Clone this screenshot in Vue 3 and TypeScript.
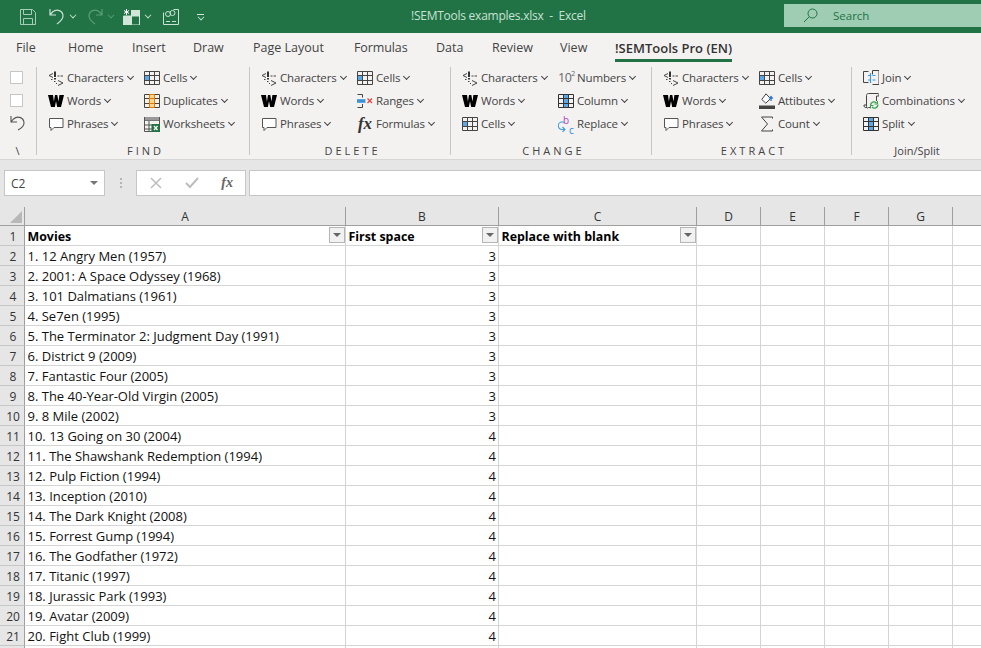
<script setup lang="ts">
type Item = { icon: string; label: string };
type Group = { name: string; width: number; spaced: boolean; cols: { width: number; items: Item[] }[] };

const phr = (): Item[] => [
  { icon: "chars", label: "Characters" },
  { icon: "words", label: "Words" },
  { icon: "phrases", label: "Phrases" },
];

const groups: Group[] = [
  { name: "FIND", width: 213, spaced: true, cols: [
    { width: 96, items: phr() },
    { width: 100, items: [
      { icon: "cells", label: "Cells" },
      { icon: "dups", label: "Duplicates" },
      { icon: "sheets", label: "Worksheets" },
    ] },
  ] },
  { name: "DELETE", width: 201, spaced: true, cols: [
    { width: 96, items: phr() },
    { width: 90, items: [
      { icon: "cells", label: "Cells" },
      { icon: "ranges", label: "Ranges" },
      { icon: "fx", label: "Formulas" },
    ] },
  ] },
  { name: "CHANGE", width: 201, spaced: true, cols: [
    { width: 96, items: [
      { icon: "chars", label: "Characters" },
      { icon: "words", label: "Words" },
      { icon: "cells", label: "Cells" },
    ] },
    { width: 90, items: [
      { icon: "num", label: "Numbers" },
      { icon: "column", label: "Column" },
      { icon: "replace", label: "Replace" },
    ] },
  ] },
  { name: "EXTRACT", width: 200, spaced: true, cols: [
    { width: 96, items: phr() },
    { width: 90, items: [
      { icon: "cells", label: "Cells" },
      { icon: "attr", label: "Attibutes" },
      { icon: "sum", label: "Count" },
    ] },
  ] },
  { name: "Join/Split", width: 130, spaced: false, cols: [
    { width: 118, items: [
      { icon: "join", label: "Join" },
      { icon: "combo", label: "Combinations" },
      { icon: "column", label: "Split" },
    ] },
  ] },
];

const tabs = ["File", "Home", "Insert", "Draw", "Page Layout", "Formulas", "Data", "Review", "View", "!SEMTools Pro (EN)"];
const columns = ["A", "B", "C", "D", "E", "F", "G", ""];
const movies = [
  "1. 12 Angry Men (1957)", "2. 2001: A Space Odyssey (1968)", "3. 101 Dalmatians (1961)", "4. Se7en (1995)",
  "5. The Terminator 2: Judgment Day (1991)", "6. District 9 (2009)", "7. Fantastic Four (2005)",
  "8. The 40-Year-Old Virgin (2005)", "9. 8 Mile (2002)", "10. 13 Going on 30 (2004)",
  "11. The Shawshank Redemption (1994)", "12. Pulp Fiction (1994)", "13. Inception (2010)",
  "14. The Dark Knight (2008)", "15. Forrest Gump (1994)", "16. The Godfather (1972)", "17. Titanic (1997)",
  "18. Jurassic Park (1993)", "19. Avatar (2009)", "20. Fight Club (1999)",
];
const spaces = movies.map((_, i) => (i < 9 ? 3 : 4));
const heads = ["Movies", "First space", "Replace with blank"];
</script>

<template>
  <div class="app">
    <svg class="defs" width="0" height="0">
      <symbol id="chars" viewBox="0 0 16 16">
        <path d="M5 3.500 1 5.500l4 2M10 10.500l5 2.500-5 2.500M9.500 6h2M12.500 6h2.500M3 9.500h1.500M6 11.500h1.500M8 13.500h1" fill="none" stroke="#444" />
        <path d="M6 1.500h2v5.500H6zM6 8h2v1.500H6z" fill="#333" />
      </symbol>
      <symbol id="words" viewBox="0 0 16 16">
        <path d="M0 2h5l.9 6.500L7 2h2.300l1.200 6.500L11.400 2H16l-3 12H9.200L8 8.300 6.900 14H3z" fill="#000" />
      </symbol>
      <symbol id="phrases" viewBox="0 0 16 16">
        <path d="M1.500 2.500h13.500v9H6l-3 3v-3H1.500z" fill="#fff" stroke="#555" />
      </symbol>
      <symbol id="cells" viewBox="0 0 16 16">
        <rect x="1" y="5.500" width="5" height="5" fill="#5ca8e6" />
        <path d="M.5 1.500h15v13H.5zM5.500 1.500v13M10.500 1.500v13M.5 5.500h15M.5 10.500h15" fill="none" stroke="#444" />
      </symbol>
      <symbol id="dups" viewBox="0 0 16 16">
        <path d="M5.500 1.500h5v13h-5z" fill="#fbd38a" />
        <path d="M.5 1.500h15v13H.5zM.5 5.500h15M.5 10.500h15" fill="none" stroke="#444" />
        <path d="M5.500 1.500h5v13h-5zM5.500 5.500h5M5.500 10.500h5" fill="none" stroke="#e07b00" />
      </symbol>
      <symbol id="sheets" viewBox="0 0 16 16">
        <path d="M.5 4.500h15M.5 9h8M.5 13h8M5 4.500v11" stroke="#555" fill="none" />
        <path d="M.5 1h15v3.500H.5z" fill="#999" />
        <path d="M.5 1v14.500h8M15.500 1v7" stroke="#555" fill="none" />
        <rect x="7.500" y="8" width="8.500" height="8" fill="#217346" />
        <path d="M10 10l3.500 4M13.500 10 10 14" stroke="#fff" stroke-width="1.300" />
      </symbol>
      <symbol id="ranges" viewBox="0 0 16 16">
        <path d="M5.500 1.500H.5M.5 14.500h5M5.500 1.500v3M5.500 11v3.500" stroke="#444" fill="none" />
        <rect x="0" y="6" width="8.500" height="4" fill="#5ca8e6" />
        <path d="M0 8h8" stroke="#2a78b8" />
        <path d="M10.500 5.500l4.500 4.500M15 5.500 10.500 10" stroke="#e8413c" stroke-width="1.200" />
      </symbol>
      <symbol id="column" viewBox="0 0 16 16">
        <rect x="5.500" y="1.500" width="5" height="13" fill="#5ca8e6" />
        <path d="M.5 1.500h15v13H.5zM5.500 1.500v13M10.500 1.500v13M.5 5.500h15M.5 10.500h15" fill="none" stroke="#333" />
      </symbol>
      <symbol id="replace" viewBox="0 0 16 16">
        <path d="M6 6H4a3.500 3.500 0 0 0 0 7.500H6.500M4.500 11l2.500 2.500L4.500 16" fill="none" stroke="#3b9ae0" stroke-width="1.100" />
      </symbol>
      <symbol id="attr" viewBox="0 0 16 16">
        <rect x="0" y="12.500" width="16" height="3.500" fill="#444" />
        <path d="M7 .8 2.800 6.500l4 3.700 4.700-4.500z" fill="#fff" stroke="#444" />
        <path d="M12 8V4M10.300 5.500 12 3.500l1.700 2" fill="none" stroke="#2b7cd3" stroke-width="1.300" />
      </symbol>
      <symbol id="sum" viewBox="0 0 16 16">
        <path d="M13.500 2.500V1H2.500l6 7-6 7h11v-1.500" fill="none" stroke="#444" />
      </symbol>
      <symbol id="join" viewBox="0 0 16 16">
        <path d="M5.500 1.500H.5v11h5M9.500 4.500V.5h6.500v14H9.500" fill="none" stroke="#444" />
        <path d="M7.500 3v10M5 5.500h2.500M5 10h2.500M9.500 5.500h3M9.500 10h3" stroke="#3b9ae0" stroke-width="1.200" fill="none" />
      </symbol>
      <symbol id="combo" viewBox="0 0 16 16">
        <path d="M4 14.500H2.500L1 13.500V12h2.500V2.500C3.500 1 4.500.5 5.500.5h9.500c.7 0 1 1 1 2.500h-2.500v5M3.500 12v1.500a1 1 0 0 0 2 1h2" fill="none" stroke="#444" />
        <path d="M7.500 12.500a3.500 3.500 0 0 1 6-2.500M15 11.500a3.500 3.500 0 0 1-6 2.500" fill="none" stroke="#3aa14b" stroke-width="1.300" />
        <path d="M14.500 8v3h-3M7.500 15.500v-3h3" fill="none" stroke="#3aa14b" />
      </symbol>
    </svg>

    <header class="titlebar">
      <div class="qat">
        <svg class="q" width="16" height="16" viewBox="0 0 16 16" fill="none" stroke="#a5cfb7">
          <path d="M.5.500h12l3 3v12H.5zM3.500.500v5h8v-5M3.500 15.500v-6h9v6" />
        </svg>
        <svg class="q undo" width="16" height="17" viewBox="0 0 16 17" fill="none" stroke="#c8e2d3" stroke-width="1.200">
          <path d="M1 1v6h6M1 7l2.500-3C8 0 14 3 14 8c0 3-2 5-6 8" />
        </svg>
        <i class="caret c1" />
        <svg class="q redo" width="16" height="17" viewBox="0 0 16 17" fill="none" stroke="#5b9d79" stroke-width="1.200">
          <path d="M15 1v6H9M15 7l-2.500-3C8 0 2 3 2 8c0 3 2 5 6 8" />
        </svg>
        <i class="caret c2 dim" />
        <svg class="q tbl" width="17" height="16" viewBox="0 0 17 16">
          <path d="M0 7h8v9H0zM8 1h8v6H8z" fill="#cfe6d9" />
          <path d="M8.500 1v15M16.500 1v15H.5V7h16" fill="none" stroke="#cfe6d9" />
          <path d="M3.500 0v6M1 1.500l5 3M6 1.500l-5 3" stroke="#fff" />
        </svg>
        <i class="caret c3" />
        <svg class="q form" width="16" height="16" viewBox="0 0 16 16" fill="none" stroke="#c8e2d3">
          <path d="M.5 3.500v12h15V.5h-5M3 12.500h4M9 12.500h4" />
          <circle cx="5" cy="5" r="2.500" />
          <circle cx="9.500" cy="4" r="2.500" />
        </svg>
        <span class="custom"><b /><i class="caret" /></span>
      </div>
      <div class="title">!SEMTools examples.xlsx&nbsp; - &nbsp;Excel</div>
      <div class="search">
        <svg width="15" height="15" viewBox="0 0 15 15" fill="none" stroke="#217346">
          <circle cx="9.500" cy="5.500" r="4.500" />
          <path d="M6 9 1 14" />
        </svg>
        <span>Search</span>
      </div>
    </header>

    <nav class="tabs">
      <span v-for="(t, i) in tabs" :key="t" class="tab" :class="['t' + i]">{{ t }}</span>
    </nav>

    <section class="ribbon">
      <div class="first">
        <div class="smalls">
          <span class="check" />
          <span class="check" />
          <svg width="16" height="17" viewBox="0 0 16 17" fill="none" stroke="#555" stroke-width="1.100">
            <path d="M1 2v6h6M1 8l2.500-3C8 1 14 4 14 9c0 3-2 5-6 7" />
          </svg>
        </div>
        <div class="glabel slash">\</div>
      </div>
      <div v-for="g in groups" :key="g.name" class="group" :style="{ width: g.width + 'px' }">
        <div class="cols">
          <div v-for="(c, ci) in g.cols" :key="ci" class="col" :style="{ width: c.width + 'px' }">
            <div v-for="it in c.items" :key="it.label" class="item">
              <span v-if="it.icon === 'fx'" class="ico fxi">fx</span>
              <span v-else-if="it.icon === 'num'" class="ico numi">10<sup>2</sup></span>
              <span v-else-if="it.icon === 'replace'" class="ico repi">
                <svg width="16" height="16"><use href="#replace" /></svg>
                <em class="rb">b</em><em class="rc">c</em>
              </span>
              <svg v-else class="ico" width="16" height="16"><use :href="'#' + it.icon" /></svg>
              <span class="lbl">{{ it.label }}</span>
              <i class="chev" />
            </div>
          </div>
        </div>
        <div class="glabel" :class="{ spaced: g.spaced }">{{ g.name }}</div>
      </div>
    </section>

    <section class="fbar">
      <div class="namebox"><span>C2</span><i class="tri" /></div>
      <div class="dots"><b /><b /><b /></div>
      <div class="fbtns">
        <svg width="12" height="12" viewBox="0 0 12 12" stroke="#bdbdbd" stroke-width="1.500"><path d="M1 1l10 10M11 1 1 11" /></svg>
        <svg width="14" height="12" viewBox="0 0 14 12" fill="none" stroke="#bdbdbd" stroke-width="2"><path d="M1 6l4 4 8-9" /></svg>
        <span class="fxtxt">fx</span>
      </div>
      <div class="finput" />
    </section>

    <section class="sheet">
      <div class="corner"><i /></div>
      <div v-for="c in columns" :key="'h' + c" class="colhead">{{ c }}</div>

      <div class="rowhead">1</div>
      <div v-for="(c, i) in columns" :key="'r1' + i" class="cell head">
        <template v-if="i < 3">
          <span>{{ heads[i] }}</span>
          <span class="filter"><i /></span>
        </template>
      </div>

      <template v-for="(m, r) in movies" :key="m">
        <div class="rowhead">{{ r + 2 }}</div>
        <div class="cell">{{ m }}</div>
        <div class="cell num">{{ spaces[r] }}</div>
        <div v-for="k in 6" :key="k" class="cell" />
      </template>
      <div class="rowhead" />
      <div v-for="k in 8" :key="'last' + k" class="cell" />
    </section>
  </div>
</template>

<style>
html, body { margin: 0; background: #fff; overflow: hidden; }
</style>

<style scoped>
.app { width: 981px; height: 648px; overflow: hidden; font-family: "Open Sans", "Noto Sans", sans-serif; color: #444; position: relative; }
.defs { position: absolute; }
.titlebar { height: 33px; background: #217346; display: flex; position: relative; }
.qat { width: 410px; display: flex; align-items: center; padding-left: 20px; box-sizing: border-box; }
.q { flex: none; }
.undo { margin-left: 13px; }
.caret { display: block; width: 0; height: 0; }
.c1, .c2, .c3, .custom .caret { width: 5px; height: 5px; border-right: 1px solid #cfe6d9; border-bottom: 1px solid #cfe6d9; transform: rotate(45deg) scale(.8); margin: -3px 0 0 5px; }
.c2.dim { border-color: #5b9d79; }
.redo { margin-left: 11px; }
.tbl { margin-left: 9px; }
.form { margin-left: 12px; }
.custom { display: flex; flex-direction: column; margin-left: 18px; align-items: center; }
.custom b { width: 7px; height: 1px; background: #cfe6d9; margin-bottom: 1px; }
.custom .caret { margin: -2px 0 0; }
.title { position: absolute; left: 411px; top: 0; line-height: 31px; font-size: 12px; color: #c8e2d3; white-space: nowrap; letter-spacing: -.25px; }
.search { position: absolute; left: 784px; top: 4px; width: 197px; height: 23px; background: #9fcdb3; display: flex; align-items: center; box-sizing: border-box; padding-left: 19px; gap: 15px; font-size: 11.500px; color: #217346; }

.tabs { height: 33px; background: #f3f2f1; position: relative; font-size: 12.500px; color: #444; }
.tab { position: absolute; top: 6px; line-height: 18px; white-space: nowrap; }
.t0 { left: 16px; } .t1 { left: 68px; } .t2 { left: 132px; } .t3 { left: 193px; } .t4 { left: 253px; }
.t5 { left: 354px; letter-spacing: -.1px; } .t6 { left: 436px; } .t7 { left: 492px; } .t8 { left: 560px; }
.t9 { left: 615px; font-weight: 600; font-size: 13px; color: #333; width: 117px; height: 27px; }
.t9::after { content: ""; position: absolute; left: 0; right: 0; top: 20px; height: 3px; background: #217346; }

.ribbon { height: 93px; background: #f3f2f1; border-bottom: 1px solid #d6d6d6; display: flex; }
.first { width: 36px; flex: none; border-right: 1px solid #c6c6c6; height: 88px; margin-top: 1px; display: flex; flex-direction: column; box-sizing: content-box; position: relative; }
.smalls { display: flex; flex-direction: column; align-items: center; padding: 4px 0 0 10px; width: 13px; box-sizing: content-box; gap: 10px; }
.check { width: 11px; height: 11px; background: #fff; border: 1px solid #c6c6c6; display: block; flex: none; }
.smalls svg { margin-top: -3px; flex: none; margin-left: 3px; }
.group { flex: none; box-sizing: border-box; border-right: 1px solid #c6c6c6; height: 88px; margin-top: 1px; display: flex; flex-direction: column; padding-left: 11px; position: relative; }
.group:last-child { border-right: 0; }
.cols { display: flex; height: 70px; margin-top: -1px; }
.col { flex: none; display: flex; flex-direction: column; }
.item { height: 23px; display: flex; align-items: center; font-size: 11.500px; white-space: nowrap; color: #444; letter-spacing: -.15px; }
.ico { width: 16px; height: 16px; flex: none; margin-right: 3px; display: block; position: relative; }
.lbl { display: block; }
.chev { display: block; width: 4px; height: 4px; border-right: 1px solid #444; border-bottom: 1px solid #444; transform: rotate(45deg); margin: -3px 0 0 4px; }
.fxi { font-family: "Liberation Serif", serif; font-style: italic; font-weight: 700; font-size: 17px; line-height: 16px; color: #333; text-align: center; }
.numi { font-size: 12.500px; line-height: 16px; color: #666; letter-spacing: -.5px; width: 17px; margin-right: 2px; }
.numi sup { font-size: 7px; line-height: 0; vertical-align: 6px; }
.repi em { position: absolute; font-style: normal; font-size: 10px; line-height: 10px; }
.repi svg { display: block; }
.rb { left: 5px; top: -1px; color: #b146c2; }
.rc { left: 11px; top: 9px; color: #2b88d8; }
.glabel { font-size: 11px; line-height: 14px; text-align: center; color: #444; padding-right: 11px; margin-top: 9px; }
.glabel.spaced { letter-spacing: 3px; padding-right: 6px; }
.slash { padding: 0; margin: 0; position: absolute; top: 77px; left: 0; width: 35px; }

.fbar { height: 47px; background: #e6e6e6; display: flex; align-items: flex-start; box-sizing: border-box; padding: 10px 0 0 4px; position: relative; }
.namebox { height: 24px; background: #fff; border: 1px solid #c6c6c6; display: flex; align-items: center; justify-content: space-between; padding: 0 6px; width: 87px; font-size: 12px; color: #444; flex: none; }
.tri { width: 0; height: 0; border: 4px solid transparent; border-top: 4px solid #777; border-bottom: 0; }
.dots { width: 31px; height: 26px; display: flex; flex-direction: column; align-items: center; justify-content: center; gap: 2px; flex: none; }
.dots b { width: 2px; height: 2px; background: #b5b5b5; display: block; }
.fbtns { width: 110px; height: 26px; background: #fff; border: 1px solid #c6c6c6; display: flex; align-items: center; justify-content: space-between; padding: 0 12px 0 13px; box-sizing: border-box; flex: none; }
.fxtxt { font-family: "Liberation Serif", serif; font-style: italic; font-weight: 700; font-size: 14px; color: #666; }
.finput { flex: 1; height: 24px; background: #fff; border: 1px solid #c6c6c6; border-right: 0; margin-left: 3px; }

.sheet { display: grid; grid-template-columns: 25px 321px 153px 198px 64px 64px 64px 64px 29px; grid-template-rows: 19px repeat(22, 20px); font-family: "Open Sans", sans-serif; font-variant-ligatures: none; }
.corner { background: #e6e6e6; border-right: 1px solid #9f9f9f; border-bottom: 1px solid #9f9f9f; box-sizing: border-box; position: relative; }
.corner i { position: absolute; right: 2px; bottom: 2px; border-style: solid; border-width: 0 0 12px 12px; border-color: transparent transparent #b8b8b8 transparent; }
.colhead { background: #e6e6e6; border-right: 1px solid #9f9f9f; border-bottom: 1px solid #9f9f9f; box-sizing: border-box; font-size: 12px; line-height: 20px; text-align: center; color: #333; }
.rowhead { background: #e6e6e6; border-right: 1px solid #9f9f9f; border-bottom: 1px solid #c6c6c6; box-sizing: border-box; font-size: 12px; line-height: 21px; text-align: center; color: #333; padding-left: 2px; overflow: hidden; }
.cell { border-right: 1px solid #d4d4d4; border-bottom: 1px solid #d4d4d4; box-sizing: border-box; font-size: 13px; line-height: 21px; padding: 0 2px 0 2.500px; color: #111; white-space: nowrap; overflow: hidden; position: relative; }
.cell.num { text-align: right; padding-right: 2px; }
.cell.head { font-weight: 700; font-size: 12.400px; color: #000; }
.filter { position: absolute; right: 0; top: 1px; width: 16px; height: 16px; border: 1px solid #b5b5b5; background: #f1f1f1; box-sizing: border-box; }
.filter i { position: absolute; left: 3px; top: 5px; width: 0; height: 0; border: 4px solid transparent; border-top: 4px solid #666; border-bottom: 0; }
</style>
